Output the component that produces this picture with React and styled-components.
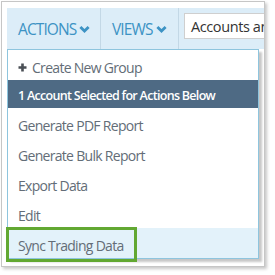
import React from "react";
import styled, { createGlobalStyle } from "styled-components";

const Global = createGlobalStyle`
  html, body { margin: 0; padding: 0; background: #fff; }
  body { font-family: "Open Sans", "Noto Sans", sans-serif; }
  * { box-sizing: border-box; }
`;

const Page = styled.div`
  width: 275px;
  height: 275px;
  padding: 1px;
`;

const Frame = styled.div`
  position: relative;
  width: 264px;
  height: 266px;
  border: 1px solid #c6c6c6;
  box-shadow: 2px 2px 3px rgba(0, 0, 0, 0.22);
  background: #fff;
  overflow: hidden;
  padding: 6px 0 0 5px;
`;

const Toolbar = styled.div`
  display: flex;
  align-items: stretch;
  height: 41px;
  width: 300px;
  background: #dcedf8;
`;

const MenuButton = styled.div`
  display: flex;
  align-items: center;
  gap: 3px;
  width: ${(p) => p.$w}px;
  padding: 1px 0 0 11px;
  border-right: 1px solid #c3d8e6;
  color: #3d93c4;
  font-size: 15.5px;
  letter-spacing: -0.9px;
`;

const Search = styled.div`
  display: flex;
  align-items: center;
  margin: 5px 0 0 5px;
  height: 26px;
  width: 110px;
  padding: 1px 0 0 6px;
  background: #fff;
  border: 1px solid #cfcfcf;
  color: #333;
  font-size: 14.5px;
  letter-spacing: -0.4px;
  white-space: nowrap;
`;

const Content = styled.div`
  position: relative;
  height: 230px;
`;

const Dropdown = styled.div`
  position: absolute;
  left: 0;
  top: 0;
  width: 252px;
  background: #fff;
  border: 1px solid #8ec5de;
  box-shadow: 3px 3px 2px rgba(0, 0, 0, 0.22);
`;

const Item = styled.div`
  display: flex;
  align-items: center;
  gap: 5px;
  height: 30px;
  padding: 4px 0 0 10px;
  font-size: 14px;
  letter-spacing: -0.7px;
  color: #636d77;
  background: ${(p) => (p.$active ? "#e3f2fa" : "#fff")};
  white-space: nowrap;
`;

const Header = styled.div`
  display: flex;
  align-items: center;
  height: 28px;
  padding: 2px 0 0 10px;
  background: #4e6a84;
  color: #fff;
  font-size: 12.5px;
  font-weight: 600;
  letter-spacing: -0.7px;
  white-space: nowrap;
`;

const Highlight = styled.div`
  position: absolute;
  left: 4px;
  top: 225px;
  width: 131px;
  height: 35px;
  border: 3px solid #62a832;
`;

const Chevron = () => (
  <svg width="11" height="9" viewBox="0 0 11 9">
    <path d="M1.4 2 L5.5 6.1 L9.6 2" fill="none" stroke="#3d93c4" strokeWidth="2.8" />
  </svg>
);

const Plus = () => (
  <svg width="9" height="9" viewBox="0 0 9 9">
    <path d="M4.5 0.5 V8.5 M0.5 4.5 H8.5" stroke="#4a4f55" strokeWidth="2.6" />
  </svg>
);

export default function App() {
  return (
    <Page>
      <Global />
      <Frame>
        <Toolbar>
          <MenuButton $w={94}>
            ACTIONS <Chevron />
          </MenuButton>
          <MenuButton $w={78}>
            VIEWS <Chevron />
          </MenuButton>
          <Search>Accounts and Groups</Search>
        </Toolbar>
        <Content>
          <Dropdown>
            <Item>
              <Plus />
              Create New Group
            </Item>
            <Header>1 Account Selected for Actions Below</Header>
            <Item>Generate PDF Report</Item>
            <Item>Generate Bulk Report</Item>
            <Item>Export Data</Item>
            <Item>Edit</Item>
            <Item $active>Sync Trading Data</Item>
          </Dropdown>
        </Content>
        <Highlight />
      </Frame>
    </Page>
  );
}
